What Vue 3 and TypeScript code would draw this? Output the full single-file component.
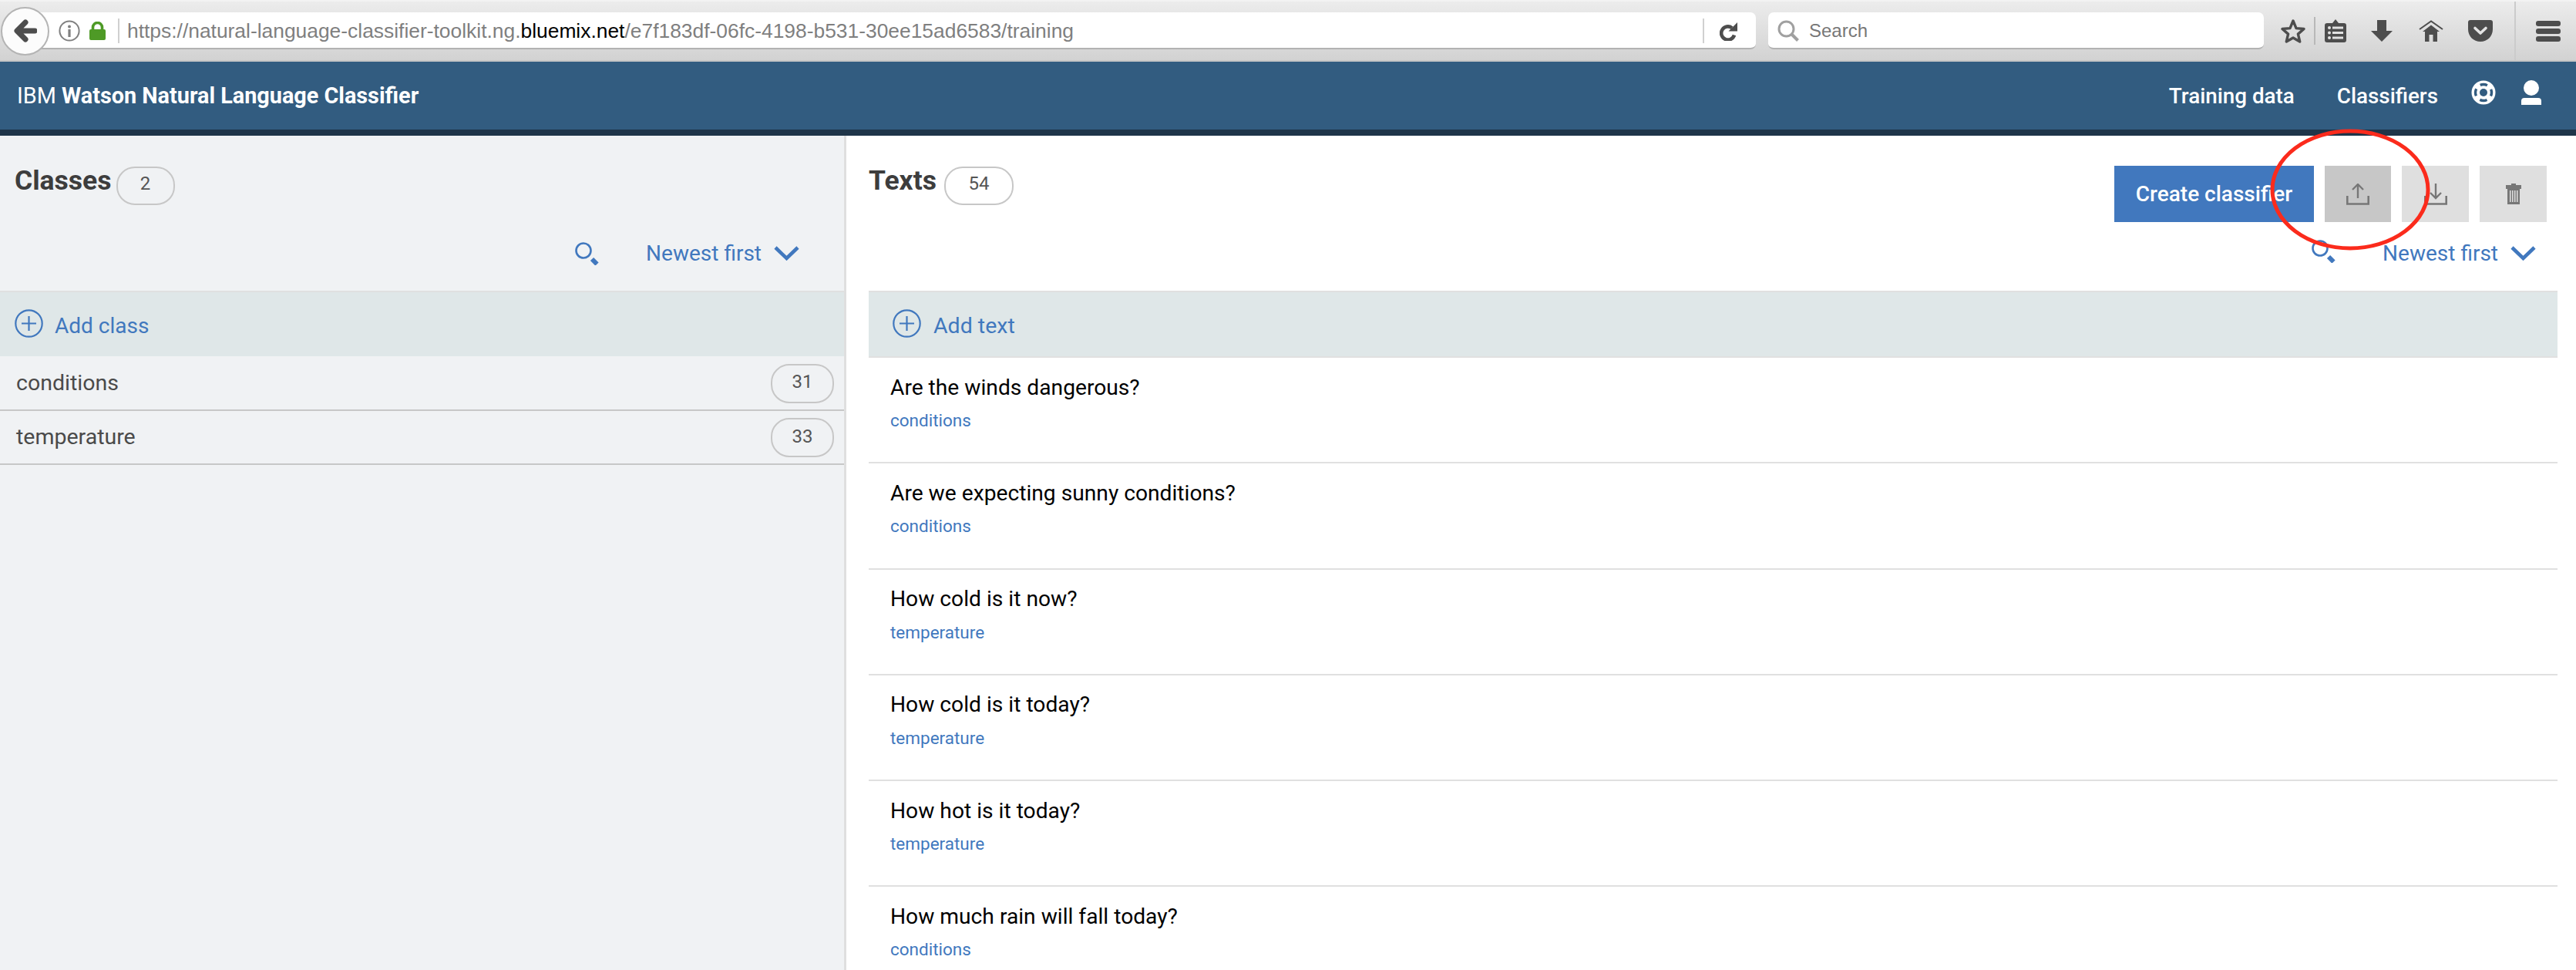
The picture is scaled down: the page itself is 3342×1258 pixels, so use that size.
<script setup lang="ts">
interface ClassItem {
  name: string
  count: number
}

interface TextItem {
  text: string
  tag: string
}

const classes: ClassItem[] = [
  { name: 'conditions', count: 31 },
  { name: 'temperature', count: 33 },
]

const texts: TextItem[] = [
  { text: 'Are the winds dangerous?', tag: 'conditions' },
  { text: 'Are we expecting sunny conditions?', tag: 'conditions' },
  { text: 'How cold is it now?', tag: 'temperature' },
  { text: 'How cold is it today?', tag: 'temperature' },
  { text: 'How hot is it today?', tag: 'temperature' },
  { text: 'How much rain will fall today?', tag: 'conditions' },
]
</script>

<template>
  <div class="page">
    <!-- barra del navegador -->
    <div class="browser">
      <div class="back">
        <svg width="30" height="32" viewBox="0 0 30 32">
          <path d="M27 16H7M15 5L4 16l11 11" fill="none" stroke="#4d4d4d" stroke-width="7" stroke-linejoin="round" stroke-linecap="round" />
        </svg>
      </div>
      <div class="urlbar">
        <svg class="info" width="28" height="28" viewBox="0 0 28 28">
          <circle cx="14" cy="14" r="12.6" fill="none" stroke="#808080" stroke-width="2" />
          <circle cx="14" cy="8.5" r="2" fill="#808080" />
          <rect x="12.4" y="12" width="3.2" height="10" fill="#808080" />
        </svg>
        <svg class="lock" width="21" height="24" viewBox="0 0 21 24">
          <path d="M4.5 11V7.5a6 6 0 0 1 12 0V11" fill="none" stroke="#4e9a26" stroke-width="3.6" />
          <rect y="10" width="21" height="14" rx="2" fill="#4e9a26" />
        </svg>
        <span class="urldiv"></span>
        <span class="url">https://natural-language-classifier-toolkit.ng.<b>bluemix.net</b>/e7f183df-06fc-4198-b531-30ee15ad6583/training</span>
        <span class="urldiv end"></span>
        <svg class="reload" width="23" height="25" viewBox="0 0 23 25">
          <path d="M16 8.2A8.6 8.6 0 1 0 19 17.5" fill="none" stroke="#4d4d4d" stroke-width="4.6" />
          <path d="M23 1V12.5H11.5Z" fill="#4d4d4d" />
        </svg>
      </div>
      <div class="searchbar">
        <svg width="28" height="28" viewBox="0 0 28 28">
          <circle cx="11.5" cy="11.5" r="9.5" fill="none" stroke="#a0a0a0" stroke-width="3" />
          <path d="M18 18l8.5 8.5" stroke="#a0a0a0" stroke-width="4" />
        </svg>
        <span>Search</span>
      </div>
      <svg class="star" width="32" height="32" viewBox="0 0 32 32">
        <path d="M16 3l4 9.6 10 .9-7.6 6.6 2.3 9.9L16 25l-8.700 5 2.300-9.900L2 13.500l10-.9Z" fill="none" stroke="#4d4d4d" stroke-width="3.400" stroke-linejoin="round" />
      </svg>
      <span class="tool-sep"></span>
      <svg class="reader" width="28" height="30" viewBox="0 0 28 30">
        <path d="M3 5h7l4-5 4 5h7a3 3 0 0 1 3 3v19a3 3 0 0 1-3 3H3a3 3 0 0 1-3-3V8a3 3 0 0 1 3-3Z" fill="#4d4d4d" />
        <g fill="#e2e2e2">
          <circle cx="6" cy="11" r="2" />
          <circle cx="6" cy="17.500" r="2" />
          <circle cx="6" cy="24" r="2" />
          <rect x="10" y="9.500" width="14" height="3" />
          <rect x="10" y="16" width="14" height="3" />
          <rect x="10" y="22.500" width="14" height="3" />
        </g>
      </svg>
      <svg class="down" width="28" height="28" viewBox="0 0 28 28">
        <path d="M8 0h12v14h8L14 28 0 14h8Z" fill="#4d4d4d" />
      </svg>
      <svg class="home" width="32" height="28" viewBox="0 0 32 28">
        <path d="M1 12L16 1.500 31 12" fill="none" stroke="#4d4d4d" stroke-width="2" />
        <path d="M16 6.500L27 15h-3v13h-5.500v-9h-5v9H8V15H5Z" fill="#4d4d4d" />
      </svg>
      <svg class="pocket" width="32" height="28" viewBox="0 0 32 28">
        <path d="M3 0h26a3 3 0 0 1 3 3v9c0 9-7 16-16 16S0 21 0 12V3a3 3 0 0 1 3-3Z" fill="#4d4d4d" />
        <path d="M9 10.500l7 6.500 7-6.500" fill="none" stroke="#e4e4e4" stroke-width="3.600" stroke-linecap="round" stroke-linejoin="round" />
      </svg>
      <span class="menu-sep"></span>
      <div class="burger"><i></i><i></i><i></i></div>
    </div>

    <header class="topbar">
      <div class="brand">IBM <b>Watson Natural Language Classifier</b></div>
      <nav class="nav">
        <a class="nav-training">Training data</a>
        <a class="nav-classifiers">Classifiers</a>
        <svg class="buoy" width="32" height="32" viewBox="0 0 32 32">
          <circle cx="16" cy="16" r="15.500" fill="#fff" />
          <circle cx="16" cy="16" r="10.500" fill="none" stroke="#325c80" stroke-width="3.400" stroke-dasharray="9.500 7" stroke-dashoffset="4.750" />
          <circle cx="16" cy="16" r="5" fill="#325c80" />
        </svg>
        <svg class="user" width="26" height="32" viewBox="0 0 26 32">
          <circle cx="13" cy="10" r="10" fill="#fff" />
          <path d="M0 32v-5a4 4 0 0 1 4-4h18a4 4 0 0 1 4 4v5Z" fill="#fff" />
        </svg>
      </nav>
    </header>

    <main class="content">
      <section class="classes">
        <div class="panel-head">
          <div class="title-row">
            <h2>Classes</h2>
            <span class="pill pill-small">2</span>
          </div>
          <div class="tools left-tools">
            <svg class="find" width="31" height="30" viewBox="0 0 31 30">
              <circle cx="11" cy="11" r="9.500" fill="none" stroke="#4178be" stroke-width="2.600" />
              <path d="M22 22l6.500 6.500" stroke="#4178be" stroke-width="6" />
            </svg>
            <span class="sort">Newest first</span>
            <svg width="33" height="19" viewBox="0 0 33 19">
              <path d="M2 2l14.500 14L31 2" fill="none" stroke="#4178be" stroke-width="4.600" />
            </svg>
          </div>
        </div>
        <div class="add-row add-class">
          <svg width="37" height="37" viewBox="0 0 37 37">
            <circle cx="18.500" cy="18.500" r="17.200" fill="none" stroke="#4178be" stroke-width="2.200" />
            <path d="M18.500 9v19M9 18.500h19" stroke="#4178be" stroke-width="2.200" />
          </svg>
          <span>Add class</span>
        </div>
        <div v-for="item in classes" :key="item.name" class="class-row">
          <span>{{ item.name }}</span>
          <span class="pill pill-count">{{ item.count }}</span>
        </div>
      </section>

      <section class="texts">
        <div class="panel-head texts-head">
          <div class="title-row">
            <h2>Texts</h2>
            <span class="pill pill-wide">54</span>
          </div>
          <div class="actions">
            <div class="buttons">
              <button class="create">Create classifier</button>
              <button class="icon-btn upload">
                <svg width="30" height="28" viewBox="0 0 30 28">
                  <path d="M15 1v18M8 8l7-7 7 7" fill="none" stroke="#777" stroke-width="2.400" />
                  <path d="M1.300 16v10.500h27.400V16" fill="none" stroke="#777" stroke-width="2.600" />
                </svg>
              </button>
              <button class="icon-btn">
                <svg width="30" height="28" viewBox="0 0 30 28">
                  <path d="M15 0v19M8 12l7 7 7-7" fill="none" stroke="#777" stroke-width="2.400" />
                  <path d="M1.300 16v10.500h27.400V16" fill="none" stroke="#777" stroke-width="2.600" />
                </svg>
              </button>
              <button class="icon-btn">
                <svg width="20" height="27" viewBox="0 0 20 27">
                  <path d="M7 0h6v2h7v5H0V2h7Z" fill="#777" />
                  <path d="M2 7h16v20H2Z" fill="#777" />
                  <path d="M5 9h1.500v15H5ZM8 9h1.500v15H8ZM11 9h1.500v15H11ZM14 9h1.500v15H14Z" fill="#dfdfdf" />
                </svg>
              </button>
            </div>
            <div class="tools right-tools">
              <svg class="find find-right" width="31" height="30" viewBox="0 0 31 30">
                <circle cx="11" cy="11" r="9.500" fill="none" stroke="#4178be" stroke-width="2.600" />
                <path d="M22 22l6.500 6.500" stroke="#4178be" stroke-width="6" />
              </svg>
              <span class="sort">Newest first</span>
              <svg width="33" height="19" viewBox="0 0 33 19">
                <path d="M2 2l14.500 14L31 2" fill="none" stroke="#4178be" stroke-width="4.600" />
              </svg>
            </div>
          </div>
        </div>
        <div class="add-row add-text">
          <svg width="37" height="37" viewBox="0 0 37 37">
            <circle cx="18.500" cy="18.500" r="17.200" fill="none" stroke="#4178be" stroke-width="2.200" />
            <path d="M18.500 9v19M9 18.500h19" stroke="#4178be" stroke-width="2.200" />
          </svg>
          <span>Add text</span>
        </div>
        <div v-for="item in texts" :key="item.text" class="text-row">
          <div class="text-body">{{ item.text }}</div>
          <div class="text-tag">{{ item.tag }}</div>
        </div>
      </section>
    </main>

    <!-- marca roja sobre la captura -->
    <svg class="annotation" width="210" height="162" viewBox="0 0 210 162">
      <ellipse cx="105" cy="81" rx="101" ry="76" fill="none" stroke="#fb2b1c" stroke-width="5" />
    </svg>
  </div>
</template>

<style scoped>
.page {
  position: relative;
  width: 3342px;
  height: 1258px;
  overflow: hidden;
  background: #fff;
  font-family: Roboto, "Liberation Sans", sans-serif;
}

.browser {
  display: flex;
  align-items: center;
  height: 80px;
  box-sizing: border-box;
  padding-left: 1px;
  background: linear-gradient(#ececec, #d2d2d2);
  border-top: 2px solid #f3f3f3;
  border-bottom: 2px solid #c6c6c6;
  font-family: "Liberation Sans", sans-serif;
}

.back {
  position: relative;
  z-index: 1;
  display: flex;
  align-items: center;
  justify-content: center;
  flex: none;
  width: 63px;
  height: 63px;
  box-sizing: border-box;
  border: 2px solid #b4b4b4;
  border-radius: 50%;
  background: #fcfcfc;
}

.urlbar {
  display: flex;
  align-items: center;
  flex: none;
  width: 2228px;
  height: 48px;
  margin-left: -14px;
  box-sizing: border-box;
  padding: 2px 0 0 26px;
  background: #fff;
  border-bottom: 2px solid #b2b2b2;
  border-radius: 0 7px 7px 0;
}

.lock {
  margin-left: 12px;
}

.urldiv {
  flex: none;
  width: 2px;
  height: 32px;
  margin-left: 16px;
  background: #d0d0d0;
}

.urldiv.end {
  margin-left: 0;
}

.url {
  flex: 1;
  padding-left: 10px;
  font-size: 26.400px;
  color: #7f7f7f;
  white-space: nowrap;
}

.url b {
  font-weight: 400;
  color: #000;
}

.reload {
  margin: 0 24px 0 20px;
}

.searchbar {
  display: flex;
  align-items: center;
  gap: 13px;
  flex: none;
  width: 643px;
  height: 48px;
  margin-left: 16px;
  box-sizing: border-box;
  padding: 2px 0 0 12px;
  background: #fff;
  border-bottom: 2px solid #b2b2b2;
  border-radius: 7px;
  font-size: 24px;
  color: #777;
}

.star {
  flex: none;
  margin-left: 22px;
}

.tool-sep {
  flex: none;
  width: 2px;
  height: 36px;
  margin-left: 11px;
  background: #b8b8b8;
}

.reader {
  flex: none;
  margin-left: 12px;
}

.down {
  flex: none;
  margin-left: 32px;
}

.home {
  flex: none;
  margin-left: 34px;
}

.pocket {
  flex: none;
  margin-left: 32px;
}

.menu-sep {
  flex: none;
  align-self: stretch;
  width: 2px;
  margin-left: 28px;
  background: #cbcbcb;
}

.burger {
  display: flex;
  flex-direction: column;
  gap: 3px;
  margin-left: 26px;
}

.burger i {
  display: block;
  width: 32px;
  height: 7px;
  border-radius: 3px;
  background: #4d4d4d;
}

.topbar {
  display: flex;
  align-items: center;
  justify-content: space-between;
  height: 96px;
  box-sizing: border-box;
  padding: 0 45px 0 22px;
  background: #325c80;
  border-bottom: 8px solid #1f3549;
  color: #fff;
}

.brand {
  font-size: 28.800px;
}

.brand b {
  font-weight: 700;
}

.nav {
  display: flex;
  align-items: center;
  font-size: 27.800px;
  font-weight: 500;
  padding-right: 0;
}

.nav-classifiers {
  margin-left: 55px;
}

.buoy {
  margin-left: 43px;
}

.buoy,
.user {
  margin-top: -8px;
}

.user {
  margin-left: 33px;
}

.content {
  display: flex;
  height: 1082px;
}

.classes {
  flex: none;
  width: 1098px;
  box-sizing: border-box;
  background: #f0f2f4;
  border-right: 3px solid #dfdfdf;
}

.texts {
  flex: 1;
  min-width: 0;
  padding: 0 24px 0 29px;
}

.panel-head {
  height: 201px;
  box-sizing: border-box;
  padding-top: 40px;
}

.title-row {
  display: flex;
  align-items: flex-start;
}

.title-row h2 {
  margin: 2px 10px 0 0;
  font-size: 35.500px;
  line-height: 32px;
  font-weight: 700;
  color: #3d3d3d;
}

.classes .title-row {
  padding-left: 19px;
}

.classes .title-row h2 {
  margin-right: 6px;
}

.pill {
  display: flex;
  align-items: center;
  justify-content: center;
  flex: none;
  box-sizing: border-box;
  height: 50px;
  padding-bottom: 6px;
  border: 2px solid #c7c7c7;
  border-radius: 24px;
  font-size: 24px;
  color: #555;
}

.pill-small {
  width: 76px;
}

.pill-wide {
  width: 90px;
}

.pill-count {
  width: 82px;
  height: 51px;
  margin-top: 2px;
  padding-bottom: 4px;
}

.tools {
  display: flex;
  align-items: center;
}

.left-tools {
  justify-content: flex-end;
  margin-top: 46px;
  padding-right: 58px;
}

.find {
  flex: none;
  margin-right: 61px;
}

.find-right {
  transform: translateY(-3px);
}

.sort {
  margin-right: 16px;
  font-size: 28px;
  color: #4178be;
}

.add-row {
  display: flex;
  align-items: center;
  box-sizing: border-box;
  background: #dfe7e8;
  border-top: 2px solid #e0e0e0;
  font-size: 28px;
  color: #4178be;
}

.add-row svg {
  flex: none;
  margin-top: -6px;
}

.add-class {
  gap: 15px;
  height: 85px;
  padding: 3px 0 0 19px;
}

.add-text {
  gap: 16px;
  height: 87px;
  padding: 3px 0 0 31px;
  border-bottom: 2px solid #e0e0e0;
  font-size: 28.500px;
}

.class-row {
  display: flex;
  align-items: center;
  justify-content: space-between;
  height: 70.500px;
  box-sizing: border-box;
  padding: 0 13px 0 21px;
  border-bottom: 2px solid #c7c7c7;
  font-size: 28.500px;
  color: #4a4a4a;
}

.texts-head {
  display: flex;
  justify-content: space-between;
  padding-top: 39px;
}

.texts-head .title-row {
  padding-top: 1px;
}

.actions {
  display: flex;
  flex-direction: column;
  align-items: flex-end;
  padding-right: 14px;
}

.buttons {
  display: flex;
  gap: 14px;
}

.buttons button {
  display: flex;
  align-items: center;
  justify-content: center;
  height: 73px;
  border: 0;
  padding: 0;
  font-family: inherit;
}

.create {
  width: 259px;
  background: #4178be;
  font-size: 28px;
  font-weight: 500;
  color: #fff;
}

.icon-btn {
  width: 87px;
  background: #dfdfdf;
}

.icon-btn.upload {
  width: 86px;
  background: #c7c7c7;
}

.right-tools {
  margin-top: 24px;
  padding-right: 14px;
}

.text-row {
  height: 137.300px;
  box-sizing: border-box;
  padding: 19.500px 0 0 28px;
  border-bottom: 2px solid #e0e0e0;
}

.text-body {
  font-size: 28.200px;
  line-height: 38px;
  color: #000;
}

.text-tag {
  margin-top: 8.500px;
  font-size: 22.500px;
  line-height: 30px;
  color: #4178be;
}

.annotation {
  position: absolute;
  left: 2944px;
  top: 165px;
}
</style>
